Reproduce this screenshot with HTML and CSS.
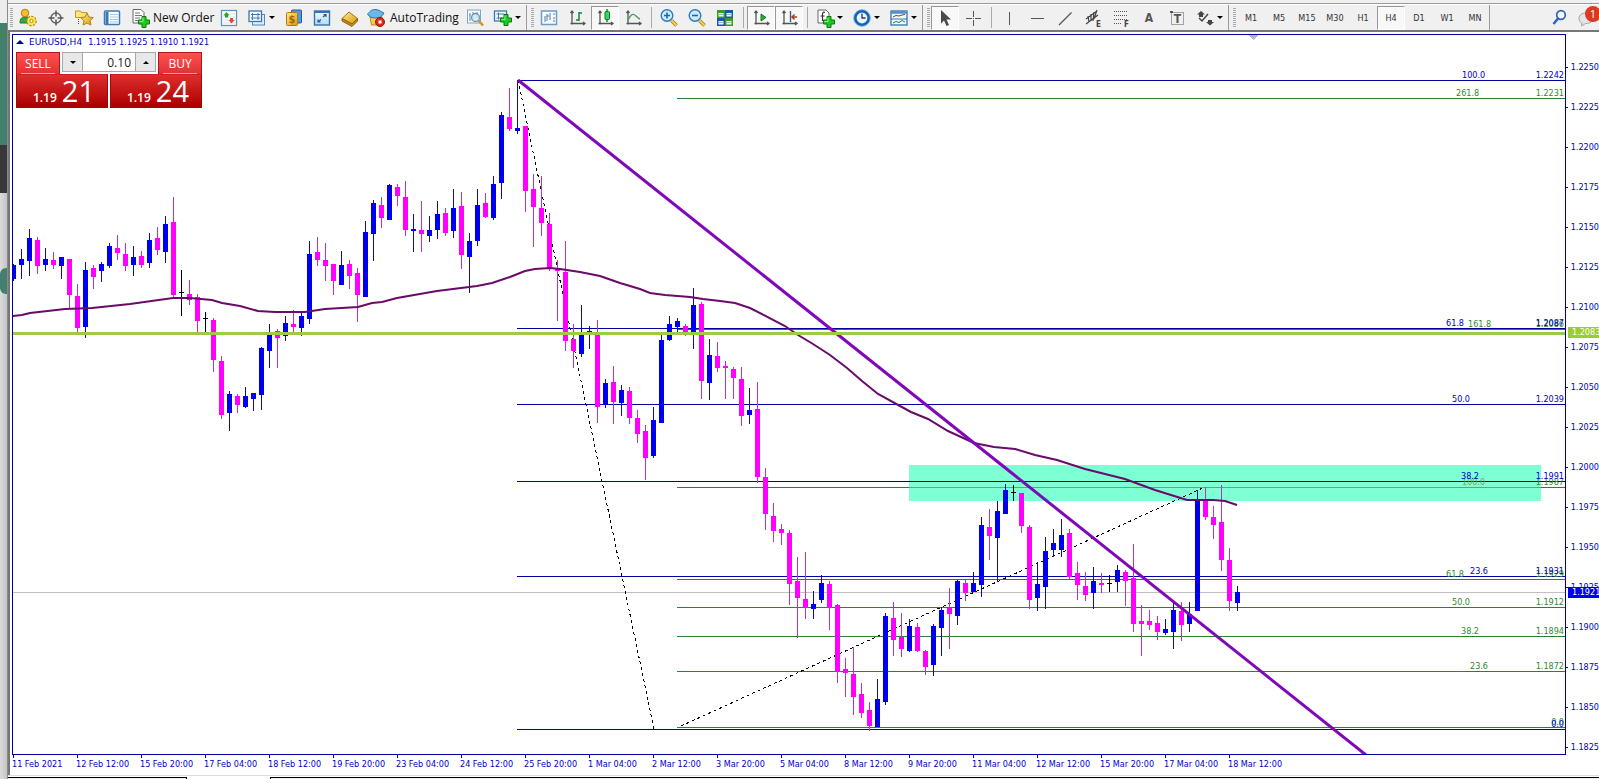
FILE: index.html
```html
<!DOCTYPE html>
<html lang="en">
<head>
<meta charset="utf-8">
<title>EURUSD,H4</title>
<link rel="stylesheet" href="styles.css">
</head>
<body>
<svg class="defs" aria-hidden="true">
  <defs>
    <linearGradient id="gold" x1="0" y1="0" x2="1" y2="1"><stop offset="0" stop-color="#ffe98a"/><stop offset="1" stop-color="#d89a10"/></linearGradient>
    <linearGradient id="sky" x1="0" y1="0" x2="0" y2="1"><stop offset="0" stop-color="#f4faff"/><stop offset="1" stop-color="#b5d8f2"/></linearGradient>
    <symbol id="plus" viewBox="0 0 12 12"><path d="M4 .5h4V4h3.500v4H8v3.500H4V8H.5V4H4z" fill="#1fc91f" stroke="#067a0b"/><path d="M5 1.500v4H1.500" fill="none" stroke="#8dfa8d"/></symbol>
    <symbol id="axes" viewBox="0 0 20 20"><path d="M5 3v13.500M3.500 15.500H18M3.500 5L5 3l1.500 2M16 14l2 1.500-2 1.500" fill="none" stroke="#555" stroke-width="1.300"/></symbol>
  </defs>
</svg>
<div class="screen">
  <div class="backdrop"><i class="bd-light"></i><i class="bd-green"></i><i class="bd-dark"></i><i class="bd-grey"></i><i class="bd-blob"></i></div>
  <main class="terminal">
    <nav class="toolbar" aria-label="Toolbar">
      <span class="grip"></span>
      <button class="tool" aria-label="Account"><svg class="icon" viewBox="0 0 20 20"><path d="M2 15c0-5 2-6 6-6s5 2 5 6z" fill="#37a546" stroke="#1e7a2c"/><circle cx="7" cy="5" r="3.800" fill="#f4bd2c" stroke="#b57d0a"/><circle cx="13.500" cy="13" r="4.500" fill="#ffe34f" stroke="#b08c10" stroke-width="1.600" stroke-dasharray="2.200 1.200"/><circle cx="13.500" cy="13" r="4" fill="#ffe34f"/><circle cx="13.500" cy="13" r="1.600" fill="#fff" stroke="#b08c10"/></svg></button>
      <button class="tool" aria-label="Target"><svg class="icon" viewBox="0 0 20 20"><circle cx="10" cy="10" r="5" fill="none" stroke="#666" stroke-width="1.500"/><path d="M10 2.500v6M10 11.500v6M2.500 10h6M11.500 10h6" stroke="#555" stroke-width="1.500"/></svg></button>
      <button class="tool" aria-label="Favorites"><svg class="icon" viewBox="0 0 20 20"><path d="M1.500 3h5l1 1.500H13v5H1.500z" fill="#ffe57a" stroke="#c9962a"/><path d="M4.500 11v6" stroke="#555" stroke-dasharray="1 1"/><path d="M13 5l1.900 4 4.400.6-3.200 3.100.8 4.400-3.900-2.100-3.900 2.100.8-4.400-3.200-3.100 4.400-.6z" fill="url(#gold)" stroke="#b8820c"/></svg></button>
      <button class="tool" aria-label="Market list"><svg class="icon" viewBox="0 0 20 20"><rect x="2.500" y="3" width="15" height="13.500" rx="1" fill="#fff" stroke="#3a7ab8" stroke-width="1.500"/><path d="M5 4v12" stroke="#3579b5" stroke-width="3"/><path d="M8 6.500h8M8 9h8M8 11.500h8M8 14h8" stroke="#a7c7e2"/></svg></button>
      <button class="tool tool-order"><svg class="icon" viewBox="0 0 20 20"><path d="M3 1.500h8l3 3V15H3z" fill="#fff" stroke="#666"/><path d="M5 5h5M5 7.500h7M5 10h5M5 12.500h3" stroke="#777"/><use href="#plus" x="8" y="8" width="12" height="12"/></svg><span>New Order</span></button>
      <button class="tool" aria-label="Depth of market"><svg class="icon" viewBox="0 0 20 20"><rect x="2.500" y="2.500" width="15" height="15" fill="#fff" stroke="#5b97c6" stroke-width="1.300"/><path d="M4 6h12M4 9h12M4 12h12M4 15h12" stroke="#cfe2f0"/><path d="M7.500 4l3 3.500H9v2H6v-2H4.500z" fill="#22a52a"/><path d="M12.500 15.500l-3-3.500H11v-2h3v2h1.500z" fill="#e8492b"/></svg></button>
      <button class="tool tool-menu" aria-label="New chart"><svg class="icon" viewBox="0 0 20 20"><rect x="5.500" y="6.500" width="12" height="10.500" fill="#dceeff" stroke="#4f86b8"/><rect x="2" y="3" width="12.500" height="10.500" fill="#f2f9ff" stroke="#3c78b0" stroke-width="1.300"/><path d="M4 6.500h9M4 10h9M5.500 5v7M11 5v7" stroke="#497ba8"/></svg><i class="caret"></i></button>
      <button class="tool" aria-label="Symbols"><svg class="icon" viewBox="0 0 20 20"><rect x="7.500" y="2" width="10" height="13" rx="1" fill="#4a9be0" stroke="#1d5e9e"/><rect x="2.500" y="4.500" width="11" height="13" rx="1" fill="url(#gold)" stroke="#b07c0c"/><text x="8" y="15" font-size="11" font-weight="700" text-anchor="middle" fill="#a86800">$</text></svg></button>
      <button class="tool" aria-label="Full screen"><svg class="icon" viewBox="0 0 20 20"><rect x="2.500" y="3" width="15" height="14" fill="url(#sky)" stroke="#2f75b1" stroke-width="1.400"/><path d="M3 4h14" stroke="#2f75b1" stroke-width="2"/><path d="M11 9l3-2.500M11.500 6.500H14V9M9 11.500L6 14M8.500 14H6v-2.500" fill="none" stroke="#265c8c" stroke-width="1.200"/></svg></button>
      <button class="tool" aria-label="Library"><svg class="icon" viewBox="0 0 20 20"><path d="M2 10.500L9 4l8.500 6.500-5.500 5.500z" fill="url(#gold)" stroke="#a8740c"/><path d="M2 10.500v2.500l10 5.500 5.500-5.500v-2.500L12 16z" fill="#c98b14" stroke="#8e6108"/></svg></button>
      <button class="tool tool-auto"><svg class="icon" viewBox="0 0 20 20"><path d="M4 9l1.500 8h9L16 9z" fill="#f6d04d" stroke="#b58a14"/><path d="M1.500 6c2-1.500 3-4.500 7.500-4.500S15 4 18 5c-1.500 3.500-5 5-8.500 5S3 9 1.500 6z" fill="#6cb7e8" stroke="#2c78ae"/><circle cx="14" cy="14" r="4.500" fill="#dd2c16" stroke="#9a1508"/><rect x="12.500" y="12.500" width="3" height="3" fill="#fff"/></svg><span>AutoTrading</span></button>
      <button class="tool" aria-label="Data window"><svg class="icon" viewBox="0 0 20 20"><rect x="2.500" y="2" width="13" height="13" fill="#f4faff" stroke="#7ea6c6"/><path d="M5 5v8M4 7h1M8 4v8M12 4v6" stroke="#6a8ba6"/><circle cx="10.500" cy="9.500" r="4" fill="#cde9fb" fill-opacity=".8" stroke="#7394ad" stroke-width="1.300"/><path d="M13.500 12.500l4.500 5" stroke="#c7972c" stroke-width="2.500"/></svg></button>
      <button class="tool tool-menu" aria-label="Add indicator"><svg class="icon" viewBox="0 0 20 20"><rect x="1.500" y="3" width="12" height="10" fill="#f4faff" stroke="#3c78b0" stroke-width="1.300"/><path d="M3.500 6h8M3.500 10h6M5.500 4.500v7" stroke="#497ba8"/><use href="#plus" x="7" y="6" width="12" height="12"/></svg><i class="caret"></i></button>
      <span class="edge"></span><span class="grip"></span>
      <button class="tool" aria-label="Chart list"><svg class="icon" viewBox="0 0 20 20"><rect x="2.500" y="3" width="15" height="13.500" fill="#f7fbff" stroke="#6b9cc4" stroke-width="1.500"/><path d="M6 8v6M8 6v7M8 8h2M11 5v7M14 6h2M14 10h2M14 13h2" stroke="#567c9d"/></svg></button>
      <button class="tool" aria-label="Bar chart"><svg class="icon" viewBox="0 0 20 20"><use href="#axes"/><path d="M12 4v9M12 5h3M9 12h3" stroke="#16863a" stroke-width="1.500"/></svg></button>
      <button class="tool pressed" aria-label="Candlesticks"><svg class="icon" viewBox="0 0 20 20"><use href="#axes"/><path d="M12 1v13" stroke="#0a6e20" stroke-width="1.300"/><rect x="10" y="3.500" width="4.500" height="8" rx="1" fill="#2fd858" stroke="#0b7c25"/></svg></button>
      <button class="tool" aria-label="Line chart"><svg class="icon" viewBox="0 0 20 20"><use href="#axes"/><path d="M5 12c3-6 5-7 8-4 1.500 1.500 2.500 2.500 4 3" fill="none" stroke="#4c9a5c" stroke-width="1.400"/></svg></button>
      <span class="sep"></span>
      <button class="tool" aria-label="Zoom in"><svg class="icon" viewBox="0 0 20 20"><path d="M12.500 12.500l5 5" stroke="#a87c14" stroke-width="3.500"/><path d="M12.500 12.500l5 5" stroke="#f0cf55" stroke-width="2"/><circle cx="8" cy="7.500" r="5.800" fill="#cdeaff" stroke="#2c7cbb" stroke-width="1.400"/><path d="M8 4.500v6M5 7.500h6" stroke="#1b68a6" stroke-width="1.600"/></svg></button>
      <button class="tool" aria-label="Zoom out"><svg class="icon" viewBox="0 0 20 20"><path d="M12.500 12.500l5 5" stroke="#a87c14" stroke-width="3.500"/><path d="M12.500 12.500l5 5" stroke="#f0cf55" stroke-width="2"/><circle cx="8" cy="7.500" r="5.800" fill="#cdeaff" stroke="#2c7cbb" stroke-width="1.400"/><path d="M5 7.500h6" stroke="#1b68a6" stroke-width="1.600"/></svg></button>
      <button class="tool" aria-label="Tile windows"><svg class="icon" viewBox="0 0 20 20"><path d="M2 2h8v8H2zM10 10h8v8h-8z" fill="#3a9d22"/><path d="M10 2h8v8h-8zM2 10h8v8H2z" fill="#1d55a8"/><path d="M3.500 5h5v3.500h-5zM11.500 5h5v3.500h-5zM3.500 13h5v3.500h-5zM11.500 13h5v3.500h-5z" fill="#eef7fb"/><path d="M4 6.500h4M12 6.500h4M4 14.500h4M12 14.500h4" stroke="#8fb3cf"/></svg></button>
      <span class="sep"></span>
      <button class="tool pressed" aria-label="Auto scroll"><svg class="icon" viewBox="0 0 20 20"><use href="#axes"/><path d="M10 6v7l5-3.500z" fill="#25b33c" stroke="#0e7d21"/></svg></button>
      <button class="tool pressed" aria-label="Chart shift"><svg class="icon" viewBox="0 0 20 20"><use href="#axes"/><path d="M11.500 3v11" stroke="#2b5f94" stroke-width="1.400"/><path d="M18 9h-5M15.500 6.500L13 9l2.500 2.500" fill="none" stroke="#b23a18" stroke-width="1.500"/></svg></button>
      <span class="sep"></span>
      <button class="tool tool-menu" aria-label="Indicators"><svg class="icon" viewBox="0 0 20 20"><path d="M3 2h8l3 3v10H3z" fill="#fff" stroke="#666"/><path d="M10 4.500c-2-1-2.500.5-2.500 2V13M5.500 8h4" fill="none" stroke="#333" stroke-width="1.200"/><use href="#plus" x="8" y="8" width="12" height="12"/></svg><i class="caret"></i></button>
      <button class="tool tool-menu" aria-label="Periods"><svg class="icon" viewBox="0 0 20 20"><circle cx="10" cy="10" r="6.800" fill="#e8f5ff" stroke="#1762b4" stroke-width="2.800"/><circle cx="10" cy="10" r="8.300" fill="none" stroke="#5ba5e6" stroke-width=".8"/><path d="M10 5.500V10h3.500" fill="none" stroke="#335" stroke-width="1.300"/></svg><i class="caret"></i></button>
      <button class="tool tool-menu" aria-label="Templates"><svg class="icon" viewBox="0 0 20 20"><rect x="2" y="3" width="16" height="14" fill="#f4faff" stroke="#2f75b1" stroke-width="1.300"/><path d="M2 4.500h16" stroke="#4c90cc" stroke-width="2.500"/><path d="M2 11h16" stroke="#2f75b1"/><path d="M4 9l3-1.500 3 .5 3-1 3-.5" fill="none" stroke="#8b3a2a"/><path d="M4 15l3-1.500 3 1 3-2 3 1.500" fill="none" stroke="#1e8b3c"/></svg><i class="caret"></i></button>
      <span class="edge"></span><span class="grip"></span>
      <button class="tool pressed" aria-label="Cursor"><svg class="icon" viewBox="0 0 20 20"><path d="M6 2v13.500l3-3 2.500 5.500 2.500-1-2.500-5.500H16z" fill="#4a4a4a"/></svg></button>
      <button class="tool" aria-label="Crosshair"><svg class="icon" viewBox="0 0 20 20"><path d="M10.500 3v6M10.500 12v6M3 10.500h6M12 10.500h6M10 10.500h1" stroke="#555"/></svg></button>
      <span class="sep"></span>
      <button class="tool" aria-label="Vertical line"><svg class="icon" viewBox="0 0 20 20"><path d="M10.500 4v13" stroke="#555"/></svg></button>
      <button class="tool" aria-label="Horizontal line"><svg class="icon" viewBox="0 0 20 20"><path d="M4 10.500h13" stroke="#555"/></svg></button>
      <button class="tool" aria-label="Trend line"><svg class="icon" viewBox="0 0 20 20"><path d="M4 17L16.500 4.500" stroke="#555" stroke-width="1.200"/></svg></button>
      <button class="tool" aria-label="Channel"><svg class="icon" viewBox="0 0 20 20"><path d="M3 11L14 3M3 16L15 7M5 8l1 6M8 6v7M11 4l-1 9M14 2l-3 9" stroke="#444" stroke-width="1.200"/><text x="13" y="19" font-size="8" font-weight="700" fill="#444">E</text></svg></button>
      <button class="tool" aria-label="Fibonacci"><svg class="icon" viewBox="0 0 20 20"><path d="M3 3.500h14M3 7.500h14M3 11.500h14M3 15.500h8" stroke="#555" stroke-dasharray="1 1"/><text x="13" y="19" font-size="8" font-weight="700" fill="#444">F</text></svg></button>
      <button class="tool letter">A</button>
      <button class="tool" aria-label="Text label"><svg class="icon" viewBox="0 0 20 20"><rect x="4.500" y="4.500" width="12" height="12" fill="none" stroke="#555" stroke-dasharray="1 1"/><path d="M3 3h3v2H3z" fill="#555"/><text x="10.500" y="15" font-size="12" font-weight="700" text-anchor="middle" fill="#555">T</text></svg></button>
      <button class="tool tool-menu" aria-label="Arrows"><svg class="icon" viewBox="0 0 20 20"><path d="M6 3l4 3.500H8V9H4V6.500H2zM15 17.500l-4-3.500h2v-2h4v2h2z" fill="#444"/><path d="M4 10l3 3 6-7" fill="none" stroke="#444" stroke-width="1.500"/></svg><i class="caret"></i></button>
      <span class="edge"></span><span class="grip"></span>
      <button class="tool frame">M1</button><button class="tool frame">M5</button><button class="tool frame">M15</button><button class="tool frame">M30</button><button class="tool frame">H1</button><button class="tool frame pressed">H4</button><button class="tool frame">D1</button><button class="tool frame">W1</button><button class="tool frame">MN</button>
      <span class="edge"></span>
      <span class="spacer"></span>
      <button class="tool" aria-label="Search"><svg class="icon" viewBox="0 0 20 20"><circle cx="11" cy="7" r="4.300" fill="#f4f9ff" stroke="#2c62c4" stroke-width="1.700"/><path d="M8 10.500L3.500 16" stroke="#2c62c4" stroke-width="2.500"/></svg></button>
      <button class="tool chat" aria-label="Messages"><svg class="icon" viewBox="0 0 20 20"><path d="M9 5c-4 0-7 2-7 5.200S4 15 5 15.300L4.500 18l4-2.500c5 0 7.500-2 7.500-5.300S13 5 9 5z" fill="#e4e4e8" stroke="#a4a4aa"/></svg><b class="badge">1</b></button>
    </nav>

    <section class="chart" aria-label="EURUSD H4 chart">
      <div class="plot">
        <svg class="canvas" id="canvas" role="img" aria-label="EURUSD H4 candlesticks"></svg>
        <p class="title"><i class="up"></i><span class="symbol">EURUSD,H4</span><span>1.1915 1.1925 1.1910 1.1921</span></p>
        <form class="trade">
          <button type="button" class="side">SELL</button>
          <div class="volume"><button type="button" class="step" aria-label="Decrease volume"><i class="caret"></i></button><input type="text" value="0.10" aria-label="Volume"><button type="button" class="step" aria-label="Increase volume"><i class="up"></i></button></div>
          <button type="button" class="side">BUY</button>
          <button type="button" class="quote" aria-label="Sell at 1.1921"><span>1.19</span><span class="pips">21</span></button>
          <button type="button" class="quote quote-buy" aria-label="Buy at 1.1924"><span>1.19</span><span class="pips">24</span></button>
        </form>
      </div>
      <div class="prices" id="prices"><span class="tag tag-line">1.2083</span><span class="tag tag-bid">1.1921</span></div>
      <div class="dates" id="dates"></div>
    </section>
    <div class="tabs"><span class="tab tab-first"></span><span class="tab tab-on"></span><span class="tab tab-rest"></span></div>
  </main>
</div>
<script src="chart.js"></script>
</body>
</html>
```
FILE: styles.css
```css
* { box-sizing: border-box; }
body { margin: 0; background: #fff; font-family: "Open Sans", "Noto Sans", sans-serif; font-size: 12px; color: #111; overflow: hidden; }
button, input { font: inherit; color: inherit; margin: 0; padding: 0; border: 0; background: none; border-radius: 0; }
.defs { position: absolute; width: 0; height: 0; }

.screen { display: flex; min-height: 100vh; }
.backdrop { display: flex; flex-direction: column; width: 8px; flex: none; background: linear-gradient(90deg, #dcdcdc, #c4c4c4); border-right: 1px solid #8a8a8a; }
.bd-light { height: 23px; background: #ececec; }
.bd-green { height: 122px; background: #42806d; }
.bd-dark { height: 48px; background: #383838; }
.bd-grey { height: 75px; }
.bd-blob { height: 26px; background: #42806d; border-radius: 6px 0 0 6px; }
.terminal { flex: 1; min-width: 0; display: flex; flex-direction: column; }

.toolbar { display: flex; align-items: center; height: 32px; padding: 5px 0 0 1px; background: linear-gradient(#f0f0f0 3px, #999 3px, #999 4px, #fff 4px, #fff 5px, #f0f0f0 5px); border-bottom: 2px solid #777; white-space: nowrap; overflow: hidden; }
.toolbar > * { flex: none; }
.tool { display: flex; align-items: center; justify-content: center; width: 28px; height: 24px; }
.icon { width: 20px; height: 20px; flex: none; font-family: "DejaVu Sans Condensed", sans-serif; }
.tool-order { width: 89px; justify-content: flex-start; gap: 3px; padding-left: 4px; }
.tool-auto { width: 97px; justify-content: flex-start; gap: 4px; padding-left: 2px; }
.tool-menu { width: 37px; justify-content: flex-start; gap: 2px; padding-left: 4px; }
.pressed { border: 1px solid #fff; border-top-color: #999; border-left-color: #999; background: #f8f8f8; }
.letter { font: bold 12px "DejaVu Sans Condensed", sans-serif; color: #555; }
.frame { font: 9px "DejaVu Sans Condensed", sans-serif; color: #333; }
.grip { width: 5px; height: 20px; border: solid transparent; border-width: 0 1px; background: repeating-linear-gradient(#aaa 0 1px, #f0f0f0 1px 2px) padding-box; }
.edge { width: 4px; height: 26px; border-left: 1px solid #999; }
.sep { width: 8px; height: 21px; background: linear-gradient(90deg, transparent 4px, #aaa 4px, #aaa 5px, transparent 5px); }
.spacer { flex: 1; }
.caret { border: 3px solid transparent; border-top-color: #000; border-bottom: 0; }
.up { border: 3px solid transparent; border-bottom-color: #000; border-top: 0; }
.chat { position: relative; width: 25px; }
.badge { position: absolute; left: 11px; top: 0; width: 16px; height: 16px; border-radius: 8px; background: #dc3a20; color: #fff; font-size: 11px; font-weight: 400; line-height: 16px; }

.chart { display: grid; grid-template-columns: minmax(0, 1fr) 33px; padding: 2px 0 0 2px; border-left: 2px solid #777; background: #fff; font: 9px "DejaVu Sans Condensed", "DejaVu Sans", sans-serif; color: #0000c8; overflow: hidden; }
.plot { position: relative; border: 1px solid #0000a0; }
.canvas { display: block; width: 100%; height: 719px; overflow: hidden; }
.canvas text { font: 9px "DejaVu Sans Condensed", sans-serif; }
.crisp { shape-rendering: crispEdges; }
.title { position: absolute; left: 3px; top: 0; margin: 0; height: 14px; display: flex; align-items: center; gap: 6px; white-space: pre; }
.title .up { border-width: 0 4px 4px; border-bottom-color: #0000a0; margin-right: -1px; }
.symbol { font-family: "DejaVu Sans", sans-serif; }

.trade { position: absolute; left: 3px; top: 17px; display: grid; grid-template-columns: 44px 2px 47px 1px 48px 44px; grid-template-rows: 22px 34px; font: 12px "Open Sans", sans-serif; color: #fff; }
.side { grid-row: 1; position: relative; border: 1px solid #b01818; border-bottom: 0; background: linear-gradient(#ff5050, #e03232); line-height: 20px; }
.side::after { content: ""; position: absolute; left: 4px; right: 4px; bottom: 0; border-bottom: 1px solid #ff9a9a; }
.volume { grid-row: 1; grid-column: 2 / 6; display: flex; margin: 0 2px 2px; border: 1px solid #a8a8a8; color: #222; background: #fff; }
.volume input { flex: 1; width: 20px; padding-right: 4px; text-align: right; border: solid #a8a8a8; border-width: 0 1px; }
.step { width: 19px; background: #e8e8e8; display: flex; align-items: center; justify-content: center; }
.side:nth-of-type(1) { grid-column: 1; }
.side:nth-of-type(2) { grid-column: 6; }
.quote { grid-row: 2; grid-column: 1 / 4; display: flex; align-items: baseline; justify-content: center; gap: 5px; padding-left: 4px; border: 1px solid #a00808; border-top-color: #d02020; margin-right: 1px; background: linear-gradient(#df2e2e, #ab0000); font-weight: 600; line-height: 32px; }
.quote-buy { grid-column: 4 / 7; margin: 0 0 0 1px; }
.pips { font-size: 29px; font-weight: 400; }

.prices { position: relative; display: flex; flex-direction: column; padding-top: 13px; overflow: hidden; contain: size; }
.price { flex: none; height: 40px; line-height: 40px; display: flex; align-items: center; gap: 3px; }
.price::before { content: ""; width: 3px; border-top: 1px solid #0000a0; }
.tag { position: absolute; left: 2px; right: 0; height: 11px; line-height: 11px; padding-left: 4px; color: #fff; }
.tag-line { top: 293px; background: #9acd32; }
.tag-bid { top: 553px; background: #0000f0; }
.dates { grid-column: 1 / 3; display: flex; height: 20px; white-space: nowrap; }
.date { flex: none; width: 64px; line-height: 19px; position: relative; }
.date::before { content: ""; position: absolute; left: 1px; top: 0; height: 3px; border-left: 1px solid #0000a0; }

.tabs { display: flex; height: 4px; margin-top: auto; border-top: 1px solid #ddd; background: #fff; }
.tab { margin-top: 1px; }
.tab-first { width: 179px; border-top: 1px solid #000; border-right: 1px solid #000; background: #f0f0f0; }
.tab-on { width: 83px; }
.tab-rest { flex: 1; border-top: 1px solid #000; border-left: 1px solid #000; background: #f0f0f0; }
```
FILE: chart.js
```javascript
const NS = "http://www.w3.org/2000/svg";
const canvas = document.getElementById("canvas");

// Window coordinates of the plot's inner corner and of its right edge.
const LEFT = 13, TOP = 35, RIGHT = 1565;
const BLUE = "#0000a0", GREEN = "#2e7d32";

// [high, top, bottom, low, kind]: u rising, d falling, x unchanged; one every 8px.
const candles = [
[264,265,279,281,"u"],[249,259,265,279,"u"],[229,238,261,276,"u"],[237,240,266,274,"d"],[248,259,265,271,"u"],[252,260,265,269,"d"],
[257,257,266,279,"u"],[259,259,295,308,"d"],[284,296,328,333,"d"],[262,270,327,338,"u"],[265,268,277,289,"d"],[262,264,271,282,"u"],
[243,246,266,268,"u"],[235,248,253,260,"d"],[243,254,266,271,"d"],[246,257,265,276,"u"],[251,256,265,268,"d"],[233,240,263,268,"u"],
[227,238,250,255,"d"],[216,224,252,263,"u"],[197,222,295,298,"d"],[270,292,293,316,"x"],[280,294,300,305,"d"],[294,297,321,332,"d"],
[312,318,319,332,"x"],[318,320,360,372,"d"],[356,361,415,419,"d"],[391,394,413,431,"u"],[394,396,405,413,"d"],[387,396,407,408,"u"],
[393,393,399,411,"u"],[347,348,395,410,"u"],[324,335,351,368,"u"],[329,331,338,368,"d"],[316,323,336,341,"u"],[310,324,327,332,"d"],
[313,316,328,336,"u"],[241,254,319,324,"u"],[237,252,260,266,"d"],[243,260,266,281,"d"],[264,264,281,295,"d"],[251,265,285,285,"u"],
[260,264,276,289,"d"],[268,273,295,322,"d"],[221,232,297,297,"u"],[200,203,234,261,"u"],[197,205,218,228,"d"],[184,185,220,220,"u"],
[184,187,196,206,"d"],[181,197,230,236,"d"],[214,229,231,252,"u"],[201,230,234,252,"d"],[216,230,236,242,"u"],[201,214,230,239,"u"],
[208,213,233,236,"d"],[189,208,231,238,"u"],[192,206,255,269,"d"],[233,241,257,293,"u"],[189,205,241,246,"u"],[193,203,217,218,"d"],
[176,184,218,220,"u"],[112,115,183,199,"u"],[88,117,129,131,"d"],[80,128,131,134,"u"],[126,126,191,212,"d"],[174,189,207,247,"d"],
[176,208,223,236,"d"],[213,224,268,271,"d"],[260,269,271,321,"d"],[241,272,341,351,"d"],[324,339,351,368,"d"],[305,335,354,357,"u"],
[326,331,333,349,"u"],[320,335,407,423,"d"],[379,383,405,408,"u"],[366,382,402,424,"d"],[385,390,403,416,"u"],[387,391,418,424,"d"],
[410,418,434,443,"d"],[425,431,458,480,"d"],[407,420,456,458,"u"],[335,340,423,423,"u"],[316,324,340,341,"u"],[318,321,327,332,"u"],
[324,326,333,336,"d"],[288,305,334,349,"u"],[302,304,381,399,"d"],[339,355,383,400,"u"],[342,356,368,372,"d"],[361,366,368,399,"d"],
[367,369,378,399,"d"],[367,379,416,426,"d"],[388,410,415,424,"u"],[382,409,477,483,"d"],[468,477,514,530,"d"],[503,516,531,542,"d"],
[524,529,533,545,"d"],[530,533,584,605,"d"],[557,581,598,638,"d"],[552,599,608,619,"d"],[591,604,609,619,"u"],[575,583,600,603,"u"],
[581,584,608,630,"d"],[604,605,672,683,"d"],[658,669,673,697,"d"],[647,674,697,715,"d"],[683,694,713,718,"d"],[702,710,726,731,"d"],
[679,699,727,727,"u"],[613,616,702,705,"u"],[602,618,640,656,"d"],[613,637,649,657,"d"],[619,626,651,652,"u"],[623,627,651,652,"d"],
[650,651,667,675,"d"],[624,626,665,676,"u"],[607,610,628,656,"u"],[588,608,614,649,"d"],[580,581,616,625,"u"],[580,583,593,601,"d"],
[572,583,592,592,"u"],[517,525,585,597,"u"],[509,527,536,560,"d"],[501,511,538,582,"u"],[484,490,514,514,"u"],[485,492,493,501,"x"],
[493,493,526,533,"d"],[525,527,600,609,"d"],[562,584,598,611,"u"],[537,551,587,609,"u"],[529,543,550,557,"u"],[519,535,550,557,"u"],
[529,533,577,579,"d"],[562,573,585,600,"d"],[572,586,595,601,"d"],[567,581,593,609,"u"],[573,583,585,593,"d"],[575,583,584,592,"x"],
[565,570,582,592,"u"],[570,572,581,606,"d"],[544,578,624,632,"d"],[605,621,624,656,"d"],[610,621,625,630,"d"],[616,623,632,640,"d"],
[619,629,633,635,"u"],[603,610,632,649,"u"],[602,611,625,641,"d"],[602,614,624,632,"u"],[490,500,611,611,"u"],[487,500,517,520,"d"],
[506,517,525,539,"d"],[485,522,560,571,"d"],[548,560,601,611,"d"],[586,592,603,611,"u"]
];

const average = [
[13,316],[22,315],[30,313],[65,309],[92,308],[130,304],[173,298],[190,298],[212,300],[222,303],[240,306],[258,311],[275,312],[305,312],
[325,309],[358,307],[372,303],[382,302],[397,298],[437,291],[477,286],[492,283],[510,277],[525,271],[535,269],[550,268],[560,269],
[580,272],[600,276],[620,283],[640,289],[650,293],[665,295],[690,297],[703,299],[720,301],[735,303],[750,308],[785,326],[798,335],
[813,344],[830,355],[847,368],[862,381],[878,394],[900,406],[911,412],[928,419],[948,431],[974,443],[994,447],[1015,449],[1035,455],
[1057,460],[1085,469],[1125,479],[1155,490],[1187,500],[1213,500],[1225,501],[1237,505]
];

// [y, ratio label, label x, price, color, line start]
const levels = [
[98,"261.8",1456,"1.2231",GREEN,677],[329,"161.8",1468,"1.2086",GREEN,677],[487,"100.0",1462,"1.1987",GREEN,677],
[579,"61.8",1446,"1.1929",GREEN,677],[607,"50.0",1452,"1.1912",GREEN,677],[636,"38.2",1461,"1.1894",GREEN,677],
[671,"23.6",1470,"1.1872",GREEN,677],[727,"",1470,"0.0",GREEN,677],
[80,"100.0",1462,"1.2242",BLUE,517],[328,"61.8",1446,"1.2087",BLUE,517],[404,"50.0",1452,"1.2039",BLUE,517],
[481,"38.2",1461,"1.1991",BLUE,517],[576,"23.6",1470,"1.1931",BLUE,517],[729,"",1470,"0.0",BLUE,517]
];

function add(parent, name, attrs, text) {
  const el = document.createElementNS(NS, name);
  for (const key in attrs) el.setAttribute(key, attrs[key]);
  if (text) el.textContent = text;
  parent.appendChild(el);
  return el;
}
const path = points => points.map(([x, y]) => (x - LEFT) + "," + (y - TOP)).join(" ");

// Support zone, bid line and Fibonacci levels lie behind the candles.
const back = add(canvas, "g", { class: "crisp" });
add(back, "rect", { x: 909 - LEFT, y: 465 - TOP, width: 632, height: 36, fill: "#7fffd4" });
add(back, "rect", { x: 0, y: 592 - TOP, width: "100%", height: 1, fill: "#c0c0c0" });
for (const [y, , , , color, start] of levels)
  add(back, "rect", { x: start - LEFT, y: y - TOP, width: "100%", height: 1, fill: color });
add(back, "rect", { x: 909 - LEFT, y: 487 - TOP, width: 632, height: 1, fill: "#8f9c3c" });
add(back, "polygon", { points: path([[1248, 35], [1259, 35], [1253, 40]]), fill: "#b4b4d4" });

for (const line of [[[518, 80], [654, 729]], [[681, 726], [1205, 487]]])
  add(canvas, "polyline", { class: "crisp", points: path(line), fill: "none", stroke: "#000", "stroke-dasharray": "3 3" });

const bars = add(canvas, "g", { class: "crisp" });
const body = { u: "#0000f0", d: "#ff00ff", x: "#000" };
const wick = { u: "#101088", d: "#c030c0", x: "#000" };
candles.forEach(([high, top, bottom, low, kind], i) => {
  add(bars, "rect", { x: 8 * i, y: high - TOP, width: 1, height: low - high, fill: wick[kind] });
  add(bars, "rect", { x: 8 * i - 2, y: top - TOP, width: 5, height: bottom - top, fill: body[kind] });
});

add(canvas, "polyline", { points: path(average), fill: "none", stroke: "#6a0a6a", "stroke-width": 2 });
add(canvas, "polyline", { points: path([[518, 80], [1366, 755]]), fill: "none", stroke: "#8008b8", "stroke-width": 3 });
add(canvas, "rect", { class: "crisp", x: 0, y: 332 - TOP, width: "100%", height: 3, fill: "#9fca48" });

// Level labels keep their distance from the right edge.
const labels = add(canvas, "svg", { x: "100%", y: 0, width: 1, height: 1, overflow: "visible" });
for (const [y, ratio, x, price, color] of levels) {
  const ink = color === BLUE ? "#0000c8" : "#2e8b2e";
  if (ratio) add(labels, "text", { x: x - RIGHT, y: y - TOP - 2, fill: y === 487 ? "#8f9c5c" : ink }, ratio);
  add(labels, "text", { x: -1, y: y - TOP - 2, fill: ink, "text-anchor": "end" }, price);
}

const prices = document.getElementById("prices");
const firstTag = prices.firstChild;
for (let p = 12250; p >= 11825; p -= 25) {
  const el = document.createElement("span");
  el.className = "price";
  el.textContent = (p / 10000).toFixed(4);
  prices.insertBefore(el, firstTag);
}

const dates = document.getElementById("dates");
["11 Feb 2021", "12 Feb 12:00", "15 Feb 20:00", "17 Feb 04:00", "18 Feb 12:00", "19 Feb 20:00", "23 Feb 04:00", "24 Feb 12:00",
 "25 Feb 20:00", "1 Mar 04:00", "2 Mar 12:00", "3 Mar 20:00", "5 Mar 04:00", "8 Mar 12:00", "9 Mar 20:00", "11 Mar 04:00",
 "12 Mar 12:00", "15 Mar 20:00", "17 Mar 04:00", "18 Mar 12:00"].forEach(text => {
  const el = document.createElement("span");
  el.className = "date";
  el.textContent = text;
  dates.appendChild(el);
});
```
